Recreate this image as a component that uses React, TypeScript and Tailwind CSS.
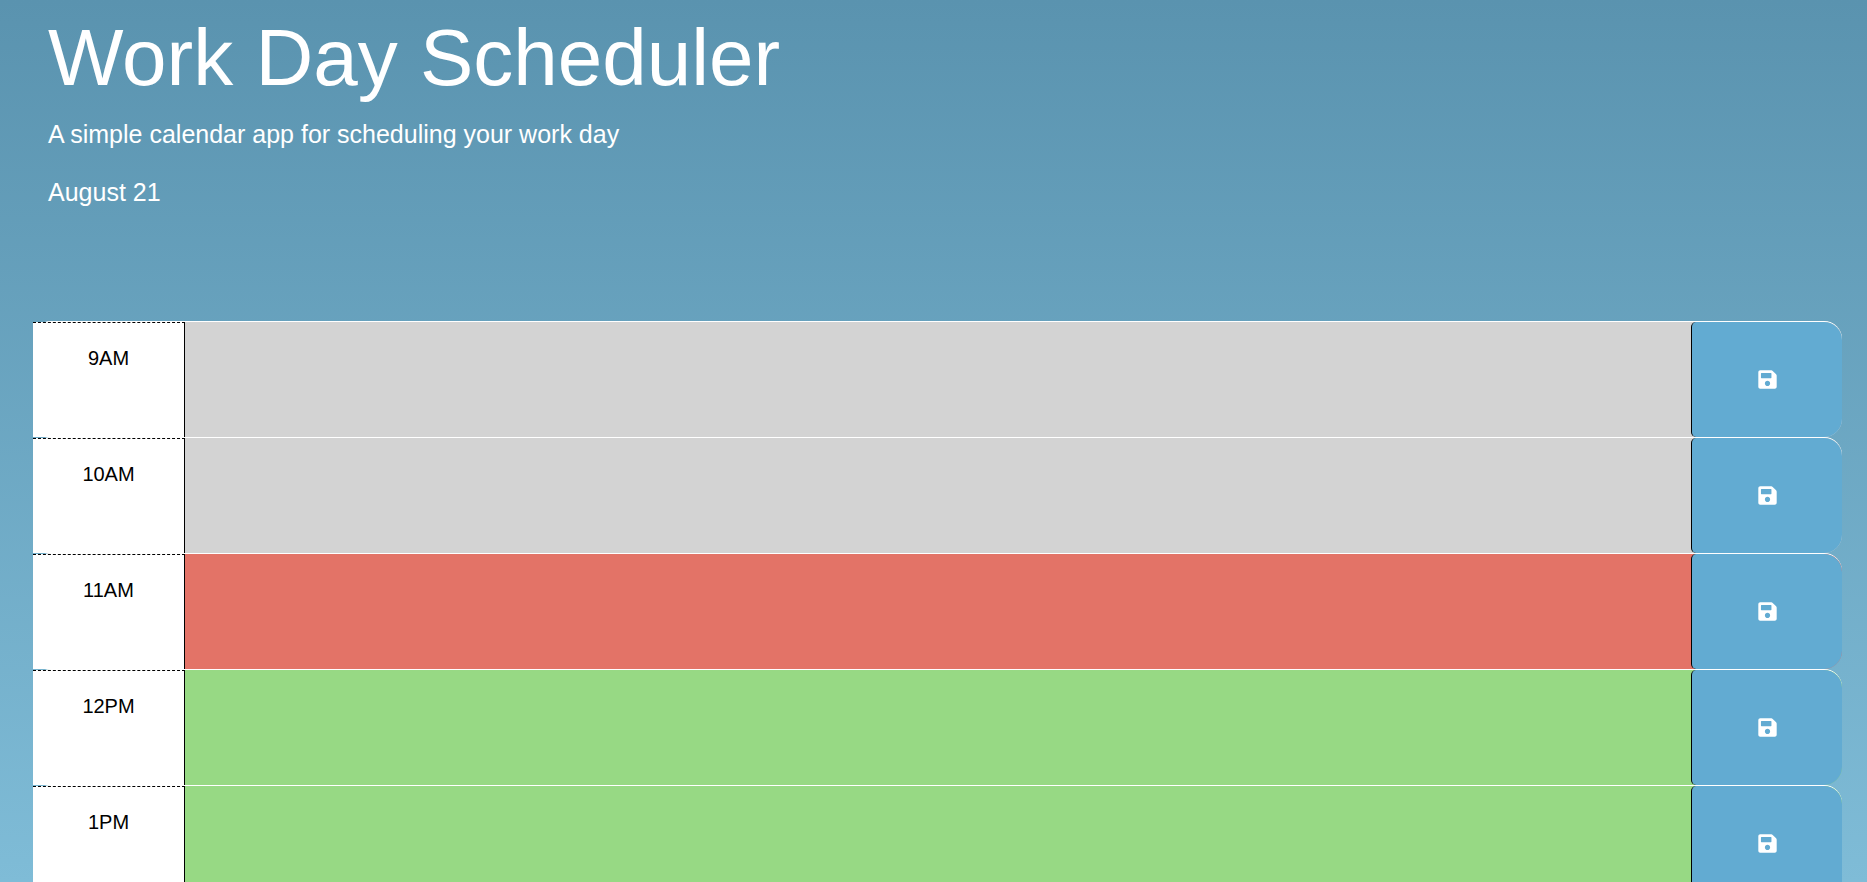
import { FaSave } from "react-icons/fa";

type Slot = { hour: string; tone: string };

const PAST = "bg-[#d3d3d3]";
const PRESENT = "bg-[#e37367]";
const FUTURE = "bg-[#97d984]";

const slots: Slot[] = [
  { hour: "9AM", tone: PAST },
  { hour: "10AM", tone: PAST },
  { hour: "11AM", tone: PRESENT },
  { hour: "12PM", tone: FUTURE },
  { hour: "1PM", tone: FUTURE },
];

function TimeBlock({ hour, tone }: Slot) {
  const id = `slot-${hour}`;
  return (
    <div className={`flex h-29 rounded-[18px] border-t border-white ${tone}`}>
      <label
        htmlFor={id}
        className="w-38 shrink-0 border-t border-r border-black bg-white pt-5 text-center text-xl/[30px] [border-top-style:dashed]"
      >
        {hour}
      </label>
      <textarea id={id} className="min-w-0 flex-1 resize-none bg-transparent p-2 text-xl outline-none" />
      {/* The slot's tone shows behind the rounded left corners of the button */}
      <button
        type="button"
        aria-label={`Save ${hour}`}
        className="flex w-[151px] shrink-0 items-center justify-center rounded-l-[5px] rounded-r-[18px] border-l border-black bg-[#62abd2] text-white"
      >
        <FaSave className="size-[21px]" />
      </button>
    </div>
  );
}

export default function App() {
  return (
    <div className="h-screen overflow-hidden bg-linear-to-b from-[#5a93af] to-[#7fbcd7] font-['Liberation_Sans',Arial,sans-serif]">
      <header className="h-80 px-12 pt-2.5 text-white">
        <h1 className="text-[80px]/24">Work Day Scheduler</h1>
        <p className="mt-2.5 text-[25px]/9">A simple calendar app for scheduling your work day</p>
        <p className="mt-5.5 text-[25px]/9">August 21</p>
      </header>
      <main className="mt-px mr-[25px] ml-[33px]">
        {slots.map((slot) => (
          <TimeBlock key={slot.hour} {...slot} />
        ))}
      </main>
    </div>
  );
}
